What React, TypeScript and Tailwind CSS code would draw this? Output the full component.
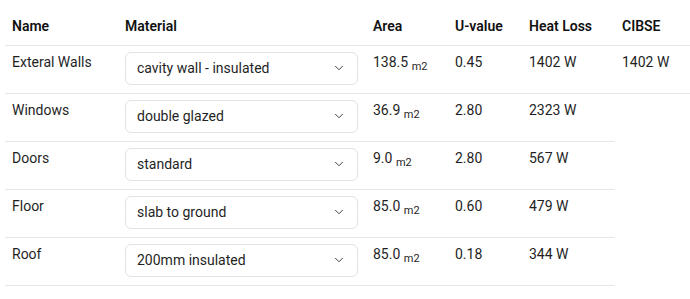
import { ChevronDown } from "lucide-react";

type Element = {
  name: string;
  material: string;
  area: string;
  uValue: string;
  heatLoss: string;
  cibse?: string;
};

const elements: Element[] = [
  {
    name: "Exteral Walls",
    material: "cavity wall - insulated",
    area: "138.5",
    uValue: "0.45",
    heatLoss: "1402 W",
    cibse: "1402 W",
  },
  { name: "Windows", material: "double glazed", area: "36.9", uValue: "2.80", heatLoss: "2323 W" },
  { name: "Doors", material: "standard", area: "9.0", uValue: "2.80", heatLoss: "567 W" },
  { name: "Floor", material: "slab to ground", area: "85.0", uValue: "0.60", heatLoss: "479 W" },
  { name: "Roof", material: "200mm insulated", area: "85.0", uValue: "0.18", heatLoss: "344 W" },
];

export default function App() {
  return (
    <div className="h-[299px] w-[690px] overflow-hidden bg-white font-['Roboto',sans-serif] text-[14px] text-[#1f1f1f]">
      <table className="ml-[5px] w-[685px] table-fixed border-collapse">
        <colgroup>
          <col className="w-[113px]" />
          <col className="w-[248px]" />
          <col className="w-[82px]" />
          <col className="w-[74px]" />
          <col className="w-[93px]" />
          <col className="w-[75px]" />
        </colgroup>

        <thead>
          <tr className="border-b border-[#e6e6e6] text-left">
            <HeaderCell>Name</HeaderCell>
            <HeaderCell>Material</HeaderCell>
            <HeaderCell>Area</HeaderCell>
            <HeaderCell>U-value</HeaderCell>
            <HeaderCell>Heat Loss</HeaderCell>
            <HeaderCell>CIBSE</HeaderCell>
          </tr>
        </thead>

        <tbody>
          {elements.map((element) => (
            <tr key={element.name}>
              <BodyCell>{element.name}</BodyCell>

              <td className="border-b border-[#e6e6e6] pb-[8px] pl-[7px] pr-[8px] pt-[6px] align-top">
                <div className="flex h-[33px] items-center justify-between rounded-[6px] border border-[#e3e3e3] bg-white pl-[11px] pr-[11px] text-[#1f1f1f]">
                  <span>{element.material}</span>
                  <ChevronDown size={14} strokeWidth={1.6} className="text-[#333]" />
                </div>
              </td>

              <BodyCell>
                {element.area}{" "}
                <span className="relative top-[3px] text-[11px]">m2</span>
              </BodyCell>
              <BodyCell>{element.uValue}</BodyCell>
              <BodyCell>{element.heatLoss}</BodyCell>
              {element.cibse && <BodyCell>{element.cibse}</BodyCell>}
            </tr>
          ))}
        </tbody>
      </table>
    </div>
  );
}

function HeaderCell({ children }: { children: React.ReactNode }) {
  return (
    <th className="h-[45px] pl-[7px] pt-[9px] text-left align-middle font-semibold text-[#111]">
      {children}
    </th>
  );
}

function BodyCell({ children }: { children: React.ReactNode }) {
  return (
    <td className="border-b border-[#e6e6e6] pl-[7px] pt-[6px] align-top leading-[20px]">
      {children}
    </td>
  );
}
